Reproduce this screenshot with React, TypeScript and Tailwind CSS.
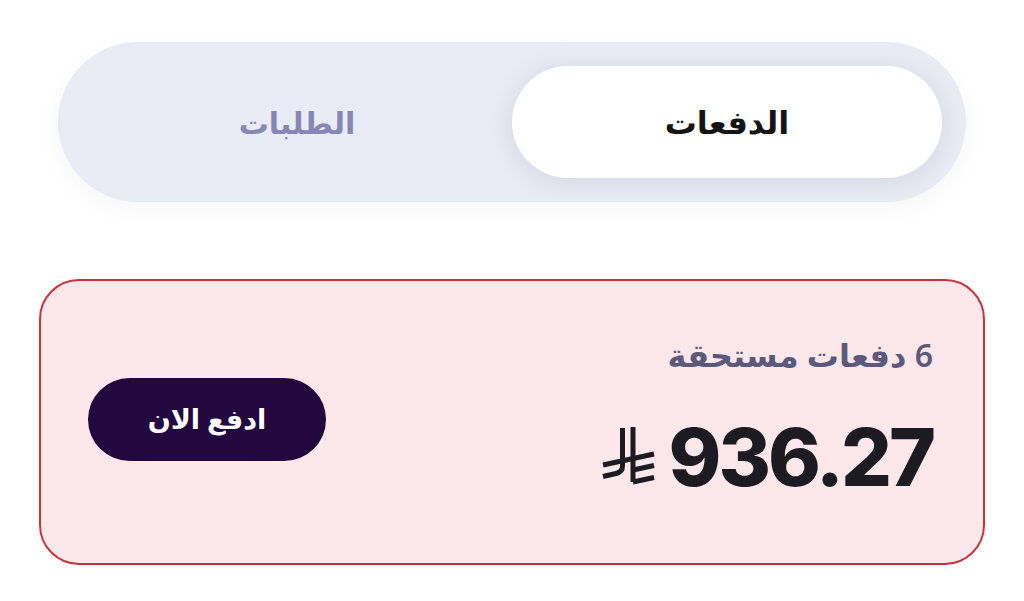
import React from "react";

const arabicFont = { fontFamily: '"Noto Sans", "DejaVu Sans", sans-serif' };

function RiyalIcon() {
  return (
    <svg width="56" height="62" viewBox="0 0 56 62" fill="none" className="shrink-0">
      {/* left stroke bending into the lower diagonal */}
      <path d="M23.5 2 V40 Q23.5 46 17 47.5 L4 50.5" stroke="#1c1b22" strokeWidth="5" />
      {/* right stroke */}
      <path d="M34 1 V56" stroke="#1c1b22" strokeWidth="5" />
      {/* upper slanted bar */}
      <path d="M4 39 L55 28" stroke="#1c1b22" strokeWidth="5" />
      {/* lower slanted bars, right side */}
      <path d="M34 44 L55 39.5" stroke="#1c1b22" strokeWidth="5" />
      <path d="M34 56 L55 51.5" stroke="#1c1b22" strokeWidth="5" />
    </svg>
  );
}

export default function App() {
  return (
    <div dir="rtl" className="w-[1024px] h-[601px] bg-white overflow-hidden pt-[42px]" style={arabicFont}>
      {/* tabs */}
      <div className="mx-[58px] h-[160px] rounded-full bg-[#e9ecf4] p-[24px] flex shadow-[0_8px_24px_rgba(40,40,80,0.04)]">
        <div className="flex-1 rounded-full bg-white flex items-center justify-center shadow-[0_4px_28px_rgba(30,30,70,0.10)]">
          <span className="text-[32px] font-bold text-[#141414]">الدفعات</span>
        </div>
        <div className="flex-1 flex items-center justify-center">
          <span className="text-[30px] font-semibold text-[#8886b6]">الطلبات</span>
        </div>
      </div>

      {/* due payments card */}
      <div className="mx-[39px] mt-[77px] h-[286px] rounded-[40px] border-2 border-[#c8323d] bg-[#fce8ea] flex justify-between pr-[50px] pl-[47px]">
        <div className="flex flex-col items-start pt-[52px]">
          <span className="text-[32px] leading-[44px] font-semibold text-[#5b5a7d]">6 دفعات مستحقة</span>
          <div dir="ltr" className="mt-[40px] flex items-center gap-[14px]">
            <RiyalIcon />
            <span className="text-[80px] leading-none font-extrabold text-[#1c1b22] tracking-[-3px]" style={{ fontFamily: "Inter, sans-serif" }}>
              936.27
            </span>
          </div>
        </div>
        <div className="pt-[97px]">
          <button className="w-[238px] h-[83px] rounded-full bg-[#22083f] text-white text-[27px] font-semibold">
            ادفع الان
          </button>
        </div>
      </div>
    </div>
  );
}
